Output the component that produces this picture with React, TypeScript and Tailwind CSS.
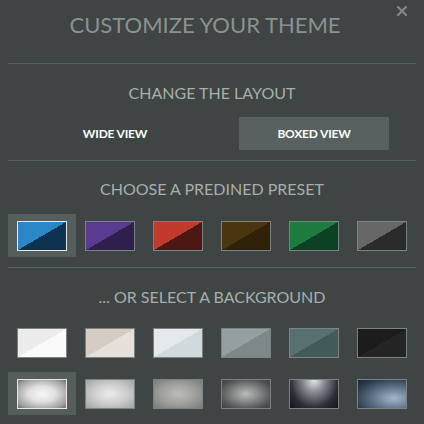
import { X } from "lucide-react";

type Swatch = { bg: string; selected?: boolean };

const presets: Swatch[] = [
  { bg: "bg-[linear-gradient(to_bottom_right,#2a86c6_50%,#0e3350_50%)]", selected: true },
  { bg: "bg-[linear-gradient(to_bottom_right,#5b3b8f_50%,#2f1f4c_50%)]" },
  { bg: "bg-[linear-gradient(to_bottom_right,#c23a2c_50%,#4d1812_50%)]" },
  { bg: "bg-[linear-gradient(to_bottom_right,#4a350f_50%,#2f2209_50%)]" },
  { bg: "bg-[linear-gradient(to_bottom_right,#1e7b40_50%,#0c4224_50%)]" },
  { bg: "bg-[linear-gradient(to_bottom_right,#676767_50%,#2b2b2b_50%)]" },
];

const backgrounds: Swatch[] = [
  { bg: "bg-[linear-gradient(to_bottom_right,#ececec_50%,#fafafa_50%)]" },
  { bg: "bg-[linear-gradient(to_bottom_right,#d5ccc3_50%,#e6e0da_50%)]" },
  { bg: "bg-[linear-gradient(to_bottom_right,#e3e9eb_50%,#d0d9dc_50%)]" },
  { bg: "bg-[linear-gradient(to_bottom_right,#959f9f_50%,#7e8888_50%)]" },
  { bg: "bg-[linear-gradient(to_bottom_right,#577070_50%,#425a5a_50%)]" },
  { bg: "bg-[linear-gradient(to_bottom_right,#1b1b1b_50%,#242424_50%)]" },
  { bg: "bg-[radial-gradient(ellipse_at_center,#f8f8f8_0%,#e0e0e0_40%,#a0a0a0_80%,#6e6e6e_100%)]", selected: true },
  { bg: "bg-[radial-gradient(ellipse_at_center,#ececec_0%,#cdcdcd_50%,#a2a2a2_100%)]" },
  { bg: "bg-[radial-gradient(ellipse_at_center,#bdbdbb_0%,#a0a09e_50%,#7a7a78_100%)]" },
  { bg: "bg-[radial-gradient(ellipse_at_center,#b8bcba_0%,#8a8e8d_35%,#4c5051_80%,#3e4244_100%)]" },
  { bg: "bg-[radial-gradient(ellipse_at_50%_0%,#e6e6e6_0%,#8a8f96_30%,#2a2e36_70%,#121419_100%)]" },
  { bg: "bg-[radial-gradient(ellipse_at_75%_65%,#a6b8ca_0%,#6a7f95_35%,#2a3848_80%,#1c2634_100%)]" },
];

function SwatchCell({ s }: { s: Swatch }) {
  return (
    <div
      className={`h-[43px] flex items-center justify-center ${
        s.selected ? "bg-[#565e5c]" : ""
      }`}
    >
      <div
        className={`w-[50px] h-[30px] border ${s.bg} ${
          s.selected ? "border-[#e6e8e8]" : "border-[#7d8382]"
        }`}
      />
    </div>
  );
}

export default function App() {
  return (
    <div
      className="w-[424px] h-[424px] bg-[#3e4544] relative overflow-hidden"
      style={{ fontFamily: "Lato, 'Open Sans', sans-serif" }}
    >
      <button className="absolute right-[14px] top-[3px] text-[#7f8685]">
        <X size={16} strokeWidth={3.5} />
      </button>

      {/* Header */}
      <div className="h-[63px] pt-[12px] pr-[14px] text-center">
        <h1 className="text-[22px] leading-[26px] text-[#8c9190]">
          CUSTOMIZE YOUR THEME
        </h1>
      </div>
      <div className="mx-2 h-px bg-[#596160]" />

      {/* Layout */}
      <div className="pt-[19px] pb-[10px]">
        <h2 className="text-center text-[16px] leading-[20px] text-[#a9aeac]">
          CHANGE THE LAYOUT
        </h2>
        <div className="mt-[14px] pl-[5px] flex justify-center gap-[49px]">
          <button className="w-[150px] h-[33px] text-[12px] font-bold text-white tracking-[-0.2px]">
            WIDE VIEW
          </button>
          <button className="w-[150px] h-[33px] bg-[#586160] text-[12px] font-bold text-white tracking-[-0.2px]">
            BOXED VIEW
          </button>
        </div>
      </div>
      <div className="mx-2 h-px bg-[#596160]" />

      {/* Presets */}
      <div className="pt-[18px] pb-[10px]">
        <h2 className="text-center text-[16px] leading-[20px] text-[#a9aeac]">
          CHOOSE A PREDINED PRESET
        </h2>
        <div className="mt-[15px] mx-2 grid grid-cols-6">
          {presets.map((s, i) => (
            <SwatchCell key={i} s={s} />
          ))}
        </div>
      </div>
      <div className="mx-2 h-px bg-[#596160]" />

      {/* Backgrounds */}
      <div className="pt-[19px]">
        <h2 className="text-center text-[16px] leading-[20px] text-[#a9aeac]">
          ... OR SELECT A BACKGROUND
        </h2>
        <div className="mt-[14px] mx-2 grid grid-cols-6 gap-y-[8px]">
          {backgrounds.map((s, i) => (
            <SwatchCell key={i} s={s} />
          ))}
        </div>
      </div>
    </div>
  );
}
